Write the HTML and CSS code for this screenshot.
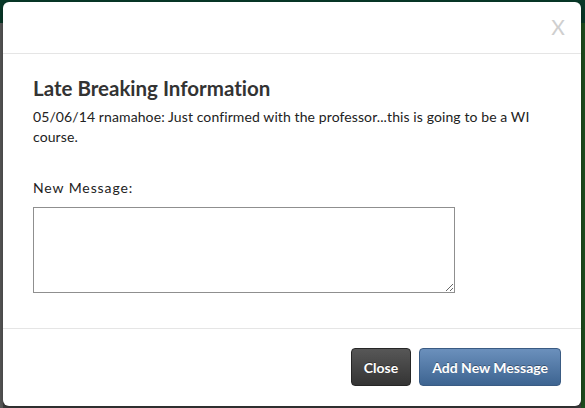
FILE: index.html
```html
<!DOCTYPE html>
<html lang="en">
<head>
<meta charset="utf-8">
<title>Late Breaking Information</title>
<link rel="stylesheet" href="styles.css">
</head>
<body>
<div class="page">
  <div class="page-band"></div>
  <div class="page-rest"></div>
</div>
<div class="modal">
  <div class="modal-header">
    <span class="close-x">X</span>
  </div>
  <div class="modal-body">
    <h3 class="title">Late Breaking Information</h3>
    <p class="message">05/06/14 rnamahoe: Just confirmed with the professor...this is going to be a WI course.</p>
    <label class="label" for="msg">New Message:</label>
    <textarea id="msg" class="textarea"></textarea>
  </div>
  <div class="modal-footer">
    <button class="btn btn-dark">Close</button>
    <button class="btn btn-primary">Add New Message</button>
  </div>
</div>
</body>
</html>
```

FILE: styles.css
```css
html, body {
  margin: 0;
  padding: 0;
}
body {
  width: 585px;
  height: 408px;
  overflow: hidden;
  position: relative;
  background: #4a4a4a;
  font-family: "Lato", "Liberation Sans", sans-serif;
  font-variant-ligatures: none;
  font-feature-settings: "liga" 0, "dlig" 0;
}
.page {
  display: flex;
  flex-direction: column;
  height: 408px;
}
.page-band {
  height: 23px;
  background: #083a29;
}
.page-rest {
  flex: 1;
  background: linear-gradient(90deg, #5a5a5a 0, #5a5a5a 3px, #3f3f3f 3px, #3f3f3f 581px, #1e4f1e 581px);
}
.modal {
  position: absolute;
  left: 3px;
  top: 2px;
  width: 578px;
  background: #fff;
  border-radius: 6px;
  box-shadow: 0 2px 6px rgba(0, 0, 0, 0.4);
}
.modal-header {
  height: 51px;
  border-bottom: 1px solid #e5e5e5;
  display: flex;
  justify-content: flex-end;
  align-items: flex-start;
  padding: 0 16px 0 0;
}
.close-x {
  margin-top: 13px;
  font-family: "Lato", "Liberation Sans", sans-serif;
  font-size: 21px;
  line-height: 24px;
  color: #cfcfcf;
}
.modal-body {
  padding: 23px 30px 35px 30px;
}
.title {
  margin: 0;
  font-size: 20.5px;
  line-height: 22px;
  font-weight: 700;
  color: #333;
  font-variant-ligatures: none;
}
.message {
  margin: 8px 0 0 0;
  font-size: 14px;
  line-height: 20px;
  letter-spacing: 0.1px;
  color: #222;
}
.label {
  display: block;
  margin-top: 31px;
  font-size: 14px;
  line-height: 20px;
  letter-spacing: 0.9px;
  color: #222;
}
.textarea {
  display: block;
  margin: 9px 0 0 0;
  box-sizing: border-box;
  width: 422px;
  height: 86px;
  border: 1px solid #8f8f8f;
  padding: 4px;
  font-family: inherit;
  font-size: 14px;
}
.modal-footer {
  border-top: 1px solid #e5e5e5;
  padding: 19px 20px 20px 20px;
  display: flex;
  justify-content: flex-end;
  gap: 8px;
}
.btn {
  height: 38px;
  box-sizing: border-box;
  padding: 0 12px;
  border-radius: 4px;
  font-family: "Lato", "Liberation Sans", sans-serif;
  font-size: 14px;
  font-weight: 700;
  color: #fff;
  text-shadow: 0 -1px 0 rgba(0, 0, 0, 0.35);
  cursor: pointer;
}
.btn-dark {
  background: linear-gradient(#575757, #343434);
  border: 1px solid #262626;
}
.btn-primary {
  background: linear-gradient(#6b90bc, #3d6491);
  border: 1px solid #3a5b83;
}
```
